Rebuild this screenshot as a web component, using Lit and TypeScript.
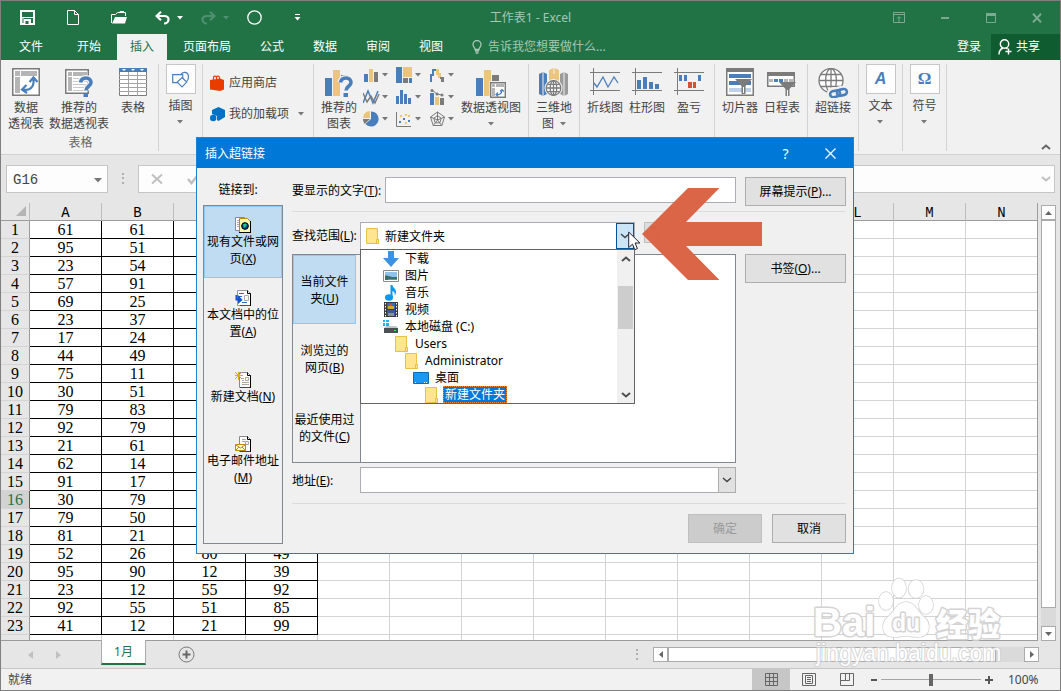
import { LitElement, html, svg, css, nothing } from "lit";
import { customElement, state } from "lit/decorators.js";
import { classMap } from "lit/directives/class-map.js";

const BLUE = "#4a7ebb";
const TAN = "#ecc57c";
const GRAY = "#7b7b7b";

const icon = (w: number, h: number, body: unknown, crisp = false) => html`
  <svg
    class="icon"
    width=${w}
    height=${h}
    viewBox="0 0 ${w} ${h}"
    fill="none"
    aria-hidden="true"
    shape-rendering=${crisp ? "crispEdges" : "auto"}
  >
    ${body}
  </svg>
`;

const baseStyles = css`
  * {
    box-sizing: border-box;
  }
  .icon {
    display: block;
    flex: none;
  }
  button {
    font: inherit;
    color: inherit;
    background: none;
    border: 0;
    margin: 0;
    padding: 0;
    cursor: default;
  }
  input,
  select {
    font: inherit;
    color: inherit;
    margin: 0;
    min-width: 0;
    outline: none;
    border-radius: 0;
  }
`;

/* ---------- glyphs: title bar ---------- */
const saveIcon = icon(15, 15, svg`<path d="M1 1h13v13H1z" stroke="#fff" stroke-width="2"/><path d="M3 2h9v5H3z" fill="#217346"/><path d="M2 7.500h11" stroke="#fff"/><path d="M4 9h7v5H4z" fill="#fff"/><path d="M5.500 11h3v3h-3z" fill="#217346"/><path d="M3 8v5" stroke="#fff"/>`);
const newIcon = icon(12, 15, svg`<path d="M.5.5h7l4 4v10H.5zM7.500.5v4h4" stroke="#fff"/>`);
const openIcon = icon(16, 13, svg`<path d="M.5 12V3.500h4l2-2h8V5" stroke="#fff"/><path d="M8 1.500 9 .5h4" stroke="#fff"/><path d="M1 12.500 4 6h12l-2 6.500z" fill="#fff"/>`);
const undoIcon = icon(15, 14, svg`<path d="M1.500 5H9c3 0 4.500 1.500 4.500 3.500S12 12.500 9 12.500M6 .8 1.600 5 6 9.200" stroke="currentColor" stroke-width="2.200"/>`);
const redoIcon = icon(15, 14, svg`<path d="M13.500 5H6C3 5 1.500 6.500 1.500 8.500S3 12.500 6 12.500M9 .8 13.400 5 9 9.200" stroke="currentColor" stroke-width="2.200"/>`);
const circleIcon = icon(15, 15, svg`<circle cx="7.500" cy="7.500" r="6.700" stroke="#fff" stroke-width="1.300"/>`);
const customizeIcon = icon(7, 7, svg`<path d="M1 .5h5" stroke="#fff"/><path d="M.5 3h6l-3 3.500z" fill="#fff"/>`);
const caret = icon(6, 4, svg`<path d="M0 0h6L3 3.500z" fill="currentColor"/>`);
const ribbonOptIcon = icon(12, 11, svg`<path d="M.5.5h11v10H.5zM0 2.500h12M6 10V5M4 6.500 6 4.500l2 2" stroke="currentColor"/>`);
const minIcon = icon(8, 2, svg`<path d="M0 0h8v2H0z" fill="currentColor"/>`);
const maxIcon = icon(10, 10, svg`<path d="M.5.5h9v9H.5z" stroke="currentColor"/><path d="M0 0h10v3H0z" fill="currentColor"/>`);
const closeIcon = icon(10, 10, svg`<path d="m1 .8 8 8.400M9 .8 1 9.200" stroke="currentColor" stroke-width="2"/>`);
const bulbIcon = icon(10, 14, svg`<path d="M3 9.500C3 7.500 1 7 1 4.500a4 4 0 0 1 8 0C9 7 7 7.500 7 9.500zM3 11h4M3.500 13h3" stroke="currentColor" stroke-width="1.300"/>`);
const shareIcon = icon(14, 16, svg`<circle cx="6.500" cy="5" r="4.200" stroke="#fff" stroke-width="1.400"/><path d="M1 15.500c0-3.500 1.500-5.500 4-6.500M8 9l1.500 1M10.500 9.500v6M7.500 12.500h6" stroke="#fff" stroke-width="1.400"/>`);

/* ---------- glyphs: ribbon ---------- */
const pivotBody = svg`<path d="M.75.75h26.500v26.500H.75z" fill="#fff" stroke="${GRAY}" stroke-width="1.500"/><path d="M3 3h5v5H3zM9 3h16v5H9zM3 9h5v16H3z" fill="#b5b5b5"/>`;
const pivotIcon = icon(28, 28, svg`${pivotBody}<path d="M11 21.500c6 1.500 11.500-2 10.500-10M17.500 14l4-4.500 4 4.500M14.500 17l-4.500 4.500 5 3.500" stroke="${BLUE}" stroke-width="2.200"/>`);
const question = svg`<path d="M15.500 14.500c.5-3 2.500-4.500 5.500-4.500 3 0 5 1.800 5 4.500 0 4-5 3.500-5 8" stroke="#f1f1f1" stroke-width="6"/><path d="M15.500 14.500c.5-3 2.500-4.500 5.500-4.500 3 0 5 1.800 5 4.500 0 4-5 3.500-5 8" stroke="${BLUE}" stroke-width="3.600"/><path d="M18.500 25h4.500v4h-4.500z" fill="${BLUE}"/>`;
const recPivotIcon = icon(28, 29, svg`<path d="M.75 1.750h22.500v23.500H.75z" fill="#fff" stroke="${GRAY}" stroke-width="1.500"/><path d="M3 4h4v4H3zM8 4h14v4H8zM3 9h4v14H3z" fill="#b5b5b5"/><path d="M8 10.500h14M8 13.500h14M8 16.500h14M8 19.500h14M8 22.500h12" stroke="#c8c8c8"/>${question}`);
const tableIcon = icon(28, 28, svg`<path d="M.5.5h27v27H.5z" fill="#fff" stroke="${GRAY}"/><path d="M0 0h28v4H0z" fill="${BLUE}"/><path d="M0 7.500h28M0 11.500h28M0 15.500h28M0 19.500h28M0 23.500h28M9.500 4v24M18.500 4v24" stroke="#a3a3a3"/><path d="M3 1h4L5 3zM12 1h4l-2 2zM21 1h4l-2 2z" fill="#fff"/>`);
const shapesIcon = icon(18, 17, svg`<path d="M9 3.500C10 .5 16.500 0 16.500 6c0 3-1 4-2.500 5" stroke="${BLUE}" stroke-width="1.200"/><path d="M.7 3.700h10v8H.7z" stroke="${BLUE}" stroke-width="1.200"/><path d="m10 6.500 4.700 4.600L10 15.800l-4.700-4.700z" fill="#fff" stroke="${BLUE}" stroke-width="1.200"/>`);
const storeIcon = icon(15, 16, svg`<path d="M0 5l10-1.500V16L0 14.500z" fill="#eb3c00"/><path d="M10 3.500 14 5v9.500L10 16z" fill="#eb3c00"/><path d="M3.500 5V2.500C3.500.8 6 .6 6.500 2.200V4M6.500 2C7 .5 9.500.8 9.500 2.500V4" stroke="#eb3c00" stroke-width="1.200"/>`);
const addinIcon = icon(15, 15, svg`<path d="m8.500 0 6.500 3v7l-6.500 4-1.500-1V9L2 7V3z" fill="#0072c6"/><circle cx="3.200" cy="11" r="3.200" fill="#0072c6"/>`);
const bars = svg`<path d="M0 10h7v18H0z" fill="${BLUE}"/><path d="M8 2h7v26H8z" fill="${TAN}"/><path d="M16 7h7v21h-7z" fill="${GRAY}"/>`;
const recChartIcon = icon(28, 30, svg`${bars}<path d="M16 12h7v16h-7z" fill="#f1f1f1"/>${question}`);
const pivotChartIcon = icon(30, 30, svg`${bars}<path d="M13.500 13h18v20h-18z" fill="#f1f1f1"/><path d="M14.700 14.700h14.600v14.600H14.700z" fill="#fff" stroke="${GRAY}" stroke-width="1.400"/><path d="M16 16h3v3h-3zM20 16h8v3h-8zM16 20h3v8h-3z" fill="#b5b5b5"/><path d="M20 26.500c3 .5 6-.5 6-4.500M24 23.500l2-2 2 2M22 24.500l-2 2 2 2" stroke="${BLUE}" stroke-width="1.200"/>`);
const chartMinis = [
  icon(16, 15, svg`<path d="M1 6h4v8H1z" fill="${BLUE}"/><path d="M6 1h4v13H6z" fill="${TAN}"/><path d="M11 4h4v10h-4z" fill="${GRAY}"/>`, true),
  icon(17, 16, svg`<path d="M0 0h6v16H0z" fill="${BLUE}"/><path d="M7 0h9v10H7z" fill="${TAN}"/><path d="M7 11h5v5H7z" fill="${GRAY}"/><path d="M13 11h3v5h-3z" fill="${BLUE}"/>`, true),
  icon(16, 15, svg`<path d="M1.500 14V6.500h2V1.500h4V6" stroke="${BLUE}" stroke-width="2"/><path d="M7 1h3v6H7z" fill="${TAN}"/><path d="M9 5h3v5H9z" fill="${TAN}"/><path d="M11 9h4v5h-3v-3h-1z" fill="${GRAY}"/>`, true),
  icon(17, 16, svg`<path d="m0 14 5-12 5 12 5-12" stroke="${BLUE}" stroke-width="1.500"/><path d="m0 4 4 9 4-6 4 7 4-9" stroke="${GRAY}" stroke-width="1.400"/>`),
  icon(16, 15, svg`<path d="M0 6h3v8H0zM4 0h3v14H4zM8 4h3v10H8zM12 8h3v6h-3z" fill="${BLUE}"/>`, true),
  icon(16, 16, svg`<path d="M1 4h4v12H1z" fill="${BLUE}"/><path d="M6 8h4v8H6z" fill="${TAN}"/><path d="M11 9h4v7h-4z" fill="${GRAY}"/><path d="m3 1 5 4 5 1" stroke="${GRAY}"/><circle cx="3" cy="1.500" r="1.500" fill="${GRAY}"/><circle cx="8" cy="5" r="1.500" fill="${GRAY}"/><circle cx="13" cy="6" r="1.500" fill="${GRAY}"/>`),
  icon(16, 16, svg`<path d="M8 8V.5A7.500 7.500 0 1 1 2.500 13z" fill="${BLUE}"/><path d="M7 7H0a7 7 0 0 1 7-7z" fill="${TAN}"/><path d="M7 8H0c0 2 .8 3.600 1.800 5z" fill="${GRAY}"/>`),
  icon(16, 16, svg`<path d="M.5 1v14.500H15" stroke="${GRAY}"/><path d="M3 10h2v2H3zM7 7h2v2H7zM12 9h2v2h-2z" fill="${BLUE}"/><path d="M4 4h2v2H4zM9 3h2v2H9zM12 4h2v2h-2zM9 11h2v2H9z" fill="${TAN}"/>`),
  icon(17, 16, svg`<path d="m8.500 1 7 5-2.700 8.500H4.200L1.500 6zM8.500 4.500l3.800 2.800-1.500 4.500H6.200L4.700 7.300zM8.500 1v8M15.500 6l-7 3M12.800 14.500 8.500 9M4.200 14.500 8.500 9M1.500 6l7 3" stroke="${GRAY}"/>`),
];
const globe = (x: number, y: number, r: number, bg: string) => svg`<g transform="translate(${x} ${y})" stroke="${GRAY}" stroke-width="1.300"><circle r="${r}" fill="${bg}"/><ellipse rx="${r * 0.45}" ry="${r}"/><path d="M${-r} 0H${r}M0 ${-r}V${r}M${-r * 0.85} ${-r * 0.5}H${r * 0.85}M${-r * 0.85} ${r * 0.5}H${r * 0.85}"/></g>`;
const mapIcon = icon(30, 28, svg`<path d="M0 6l4-2 4 2v20l-4 2-4-2z" fill="${BLUE}"/><path d="M10 2l5-2 5 2v24H10z" fill="${TAN}"/><path d="M21 6l4-2 4 2v20l-4 2-4-2z" fill="#9b9b9b"/><path d="M4 4v24M15 0v6M25 4v24" stroke="#f1f1f1"/><circle cx="14.500" cy="20" r="9" fill="#f1f1f1"/>${globe(14.5, 20, 7.3, "#fff")}`);
const axes = svg`<path d="M3.500 0v27M0 4.500h30M0 22.500h30" stroke="${GRAY}"/>`;
const sparkLineIcon = icon(30, 28, svg`${axes}<path d="m4 15 3 4 6-10 5 10 6-10 4 6" stroke="${BLUE}" stroke-width="1.300"/>`);
const sparkColIcon = icon(30, 28, svg`${axes}<path d="M5 12h4v9H5zM11 9h4v12h-4zM17 14h4v7h-4zM23 16h4v5h-4z" fill="${BLUE}"/>`, true);
const sparkWinIcon = icon(30, 28, svg`${axes}<path d="M5 7h3v6H5zM10 7h3v6h-3zM24 7h3v6h-3z" fill="${BLUE}"/><path d="M14 14h4v6h-4zM19 14h3v6h-3z" fill="#d35230"/>`, true);
const funnel = (x: number, y: number) => svg`<path transform="translate(${x} ${y})" d="M0 0h17l-6.500 7v8h-4V7z" fill="${GRAY}"/><path transform="translate(${x} ${y})" d="M8.500 8v6" stroke="#fff"/>`;
const slicerIcon = icon(28, 28, svg`<path d="M.75.75h26.500v26.500H.75z" fill="#fff" stroke="${GRAY}" stroke-width="1.500"/><path d="M0 0h28v4H0z" fill="${GRAY}"/><path d="M3 6h22v4H3zM3 13h22v4H3z" fill="${BLUE}"/><path d="M3 20h22v4H3z" fill="#c0d0e8"/>${funnel(9, 11)}`);
const timelineIcon = icon(30, 28, svg`<path d="M.75 4.750h26.500v13.500H.75z" fill="#fff" stroke="${GRAY}" stroke-width="1.500"/><path d="M0 4h28v4H0z" fill="${GRAY}"/><path d="M2 11h4v3H2zM17 11h4v3h-4zM22 11h4v3h-4z" fill="#b5b5b5"/><path d="M7 11h4v3H7zM12 11h4v3h-4z" fill="${BLUE}"/>${funnel(12, 14)}`);
const linkIcon = icon(32, 30, svg`${globe(14, 12.5, 12, "#fff")}<g stroke="#f1f1f1" stroke-width="6"><rect x="13" y="22" width="11" height="6.500" rx="3.200"/><rect x="20" y="21" width="11" height="6.500" rx="3.200"/></g><g stroke="${BLUE}" stroke-width="2.600" transform="rotate(-12 22 25)"><rect x="13" y="22" width="10" height="6" rx="3"/><rect x="20" y="22" width="10" height="6" rx="3"/></g>`);
const chevronUp = icon(10, 6, svg`<path d="m1 5 4-3.500L9 5" stroke="currentColor" stroke-width="2"/>`);
const chevronDown = icon(10, 6, svg`<path d="m1 1 4 3.500L9 1" stroke="currentColor" stroke-width="1.500"/>`);

/* ---------- glyphs: dialog ---------- */
const docBase = svg`<path d="M4.500.5h8l3 3v12h-11z" fill="#fff" stroke="#8a8a8a"/><path d="M15.500 3.500v12.500H5" stroke="#000"/><path d="M12.500.5v3h3" stroke="#000"/>`;
const fileWebIcon = icon(16, 16, svg`<path d="M.5.5h9v13h-9z" fill="#fff" stroke="#8a8a8a"/><path d="M2 3.500h5M2 5.500h5M2 7.500h5M2 9.500h5" stroke="#aaa"/><path d="M4.500 1.500h8l3 3v11h-11z" fill="#fff8b0" stroke="#b98b00"/><path d="M15.500 4v12M4 15.500h12" stroke="#000"/><circle cx="10" cy="9" r="3.500" fill="#0a4a9a"/><path d="M8 7.500 10.500 6 12 8l-3 3z" fill="#21c48b"/><circle cx="10" cy="9" r="3.300" stroke="#000"/>`);
const docPlaceIcon = icon(16, 16, svg`<path d="M2.500.5h10l3 3v12h-13z" fill="#fff" stroke="#9a9a9a"/><path d="M15.500 3.500v12.500H5M12.500.5v3h3" stroke="#000"/><path d="M4 3.500h5M4 6.500h3M7 12.500h5" stroke="#2a62d8"/><path d="M9.500 5.500h4v5h-4z" stroke="#aaa"/><path d="M1.500 5v4.500H4" stroke="#1450c8" stroke-width="2"/><path d="m3 5 4.500 5L3 14z" fill="#1450c8"/>`);
const newDocIcon = icon(16, 16, svg`${docBase}<path d="M7 6.500h2M7 8.500h2M7 10.500h7M7 12.500h7M10.500 5.500h3v3h-3z" stroke="#aaa"/><path d="m0 0 7 7M7 0 0 7M3.500 0v8M0 3.500h8" stroke="#e0b000"/>`);
const mailIcon = icon(16, 16, svg`${docBase}<path d="M7 3.500h4M7 5.500h4M10.500 5.500h3v3h-3z" stroke="#aaa"/><path d="M.5 8.500h10v6H.5z" fill="#ffffd8" stroke="#b98b00"/><path d="m1 9 4.500 3L10 9M1 14l3-3M10 14l-3-3" stroke="#b98b00"/>`);
const folderIcon = icon(16, 16, svg`<path d="M2.500.5h11v11h1v4h-12z" fill="#ffe58f" stroke="#e9bf46"/><path d="M12.500 11.500h2v4h-2z" fill="#ffe58f" stroke="#e9bf46"/>`);
const downloadIcon = icon(16, 16, svg`<path d="M5 0h6v7h5l-8 9-8-9h5z" fill="#3a92e5"/>`);
const pictureIcon = icon(16, 12, svg`<path d="M.5.5h15v11H.5z" fill="#fff" stroke="#8b8b8b"/><path d="M2 2h12v5H2z" fill="#8fc3ee"/><path d="M2 5.500c3-.5 5 2 12 1.500v3H2z" fill="#3b6f67"/><path d="M5 9h9v1H5z" fill="#5b93c7"/>`);
const musicIcon = icon(16, 16, svg`<ellipse cx="6" cy="12.500" rx="4" ry="3.200" fill="#0c98f0"/><path d="M7.500 12V0h2c0 3 3.500 3.500 3.500 7 0 1.500-.6 2.700-1.300 3.500.5-3-1-4-2.200-4.500V13z" fill="#0c98f0"/>`);
const videoIcon = icon(16, 16, svg`<path d="M1 0h14v15H1z" fill="#3b3b3b"/><path d="M4 1h8v6H4z" fill="#3e63c9"/><path d="M4 8h8v6H4z" fill="#3c55a5"/><path d="M5 4h6v3H5z" fill="#d5a526"/><path d="M6 2h3v2H6z" fill="#d14c3a"/><path d="M5 11h6v3H5z" fill="#8793a3"/><path d="M2.500 1v14M13.500 1v14" stroke="#fff" stroke-dasharray="1.500 1.500"/>`);
const driveIcon = icon(16, 14, svg`<path d="M0 0h2v2H0zM3 0h3v2H3zM0 3h2v3H0zM3 3h3v3H3z" fill="#1cb4ee"/><path d="m1 8 2-2h10l2 2z" fill="#c0c6cc"/><path d="M1 8h14v5H1z" fill="#4b5054"/><path d="M11 10h2v1h-2z" fill="#3df04a"/>`);
const desktopIcon = icon(16, 12, svg`<path d="M.5.5h15v11H.5z" fill="#1c98f3" stroke="#0b6db8"/><path d="M2 10.500h1M11 10.500h1M13 10.500h1" stroke="#fff"/>`);

@customElement("hyperlink-dialog")
class HyperlinkDialog extends LitElement {
  static styles = [
    baseStyles,
    css`
      :host {
        display: block;
        background: #f0f0f0;
        border: 1px solid #1883d7;
        color: #000;
        font-size: 12px;
        line-height: 17px;
      }
      .title {
        display: flex;
        height: 30px;
        align-items: center;
        background: #0078d7;
        color: #fff;
        padding-left: 8px;
      }
      .title h2 {
        flex: 1;
        margin: 0;
        font-size: 12px;
        font-weight: 400;
      }
      .title button {
        width: 45px;
        height: 30px;
        display: grid;
        place-items: center;
        font-size: 14px;
      }
      .body {
        display: flex;
        gap: 9px;
        padding: 9px 7px 9px 6px;
      }
      .side {
        width: 80px;
        display: flex;
        flex-direction: column;
      }
      .side h3 {
        margin: 4px 0 7px;
        padding-right: 10px;
        font-size: 12px;
        font-weight: 400;
        text-align: center;
      }
      .places {
        flex: 1;
        border: 1px solid #828790;
        display: flex;
        flex-direction: column;
        gap: 1px;
      }
      .place {
        height: 72px;
        border: 1px solid transparent;
        display: flex;
        flex-direction: column;
        align-items: center;
        justify-content: center;
        white-space: nowrap;
      }
      .chosen {
        background: #c0dcf3;
        border-color: #90c8f6;
      }
      .main {
        flex: 1;
        min-width: 0;
      }
      .row {
        display: flex;
        align-items: flex-start;
      }
      .row label {
        flex: none;
        padding-top: 1px;
        line-height: 26px;
        width: 68px;
        white-space: nowrap;
      }
      .row label.wide {
        width: 93px;
      }
      .field {
        flex: 1;
        height: 26px;
        background: #fff;
        border: 1px solid #abadb3;
        padding: 0 4px;
      }
      .btn {
        height: 29px;
        width: 101px;
        margin-left: 9px;
        flex: none;
        background: #e1e1e1;
        border: 1px solid #adadad;
      }
      .btn.small {
        width: 74px;
        margin-left: 10px;
      }
      .btn:disabled {
        background: #ccc;
        border-color: #bfbfbf;
        color: #9a9a9a;
      }
      .rule {
        border: 0;
        border-top: 1px solid #dcdcdc;
        margin: 5px 0 10px;
      }
      .rule.low {
        margin: 9px 0 10px;
      }
      .combo {
        position: relative;
        width: 275px;
        height: 27px;
        display: flex;
        align-items: center;
        background: #fff;
        border: 1px solid #abadb3;
        border-bottom: 0;
        padding-left: 3px;
      }
      .combo select {
        appearance: none;
        flex: 1;
        border: 0;
        background: none;
        padding: 0 0 0 5px;
        height: 24px;
      }
      .drop {
        width: 18px;
        align-self: stretch;
        display: grid;
        place-items: center;
        border: 1px solid #005499;
        background: #cce4f7;
        color: #444;
      }
      .nav {
        width: 21px;
        height: 21px;
        margin-left: 9px;
        border: 1px solid #bfbfbf;
        background: #ddd;
        display: grid;
        place-items: center;
      }
      .list {
        position: absolute;
        top: 26px;
        left: -1px;
        right: -1px;
        display: flex;
        background: #fff;
        border: 1px solid #646464;
        z-index: 2;
      }
      .list ul {
        flex: 1;
        margin: 0;
        padding: 0;
        list-style: none;
      }
      .list li {
        height: 17px;
        display: flex;
        align-items: center;
        gap: 4px;
        padding-left: 22px;
        white-space: nowrap;
      }
      .list .lv1 {
        padding-left: 32px;
      }
      .list .lv2 {
        padding-left: 42px;
      }
      .list .lv3 {
        padding-left: 52px;
      }
      .list .lv4 {
        padding-left: 62px;
      }
      .list li span {
        padding: 0 2px;
      }
      .list .current span {
        background: #0078d7;
        color: #fff;
        outline: 1px dotted #ff8728;
        outline-offset: -1px;
      }
      .bar {
        width: 17px;
        background: #f0f0f0;
        display: flex;
        flex-direction: column;
        align-items: center;
        color: #505050;
      }
      .bar i {
        height: 17px;
        display: grid;
        place-items: center;
      }
      .thumb {
        width: 15px;
        height: 43px;
        margin: 19px 0 auto;
        background: #cdcdcd;
      }
      .browse {
        margin-top: 5px;
      }
      .scopes {
        width: 68px;
        height: 209px;
        border: 1px solid #828790;
        border-right: 0;
        display: flex;
        flex-direction: column;
      }
      .scope {
        flex: 1;
        width: 63px;
        border: 1px solid transparent;
        white-space: nowrap;
        text-align: center;
      }
      .scope.chosen {
        background: #c0dcf3;
        border-color: #90c8f6;
      }
      .files {
        flex: 1;
        height: 209px;
        background: #fff;
        border: 1px solid #828790;
      }
      .address {
        margin-top: 4px;
        padding-right: 110px;
      }
      .address .field {
        border-right: 0;
      }
      .address button {
        width: 18px;
        height: 26px;
        display: grid;
        place-items: center;
        border: 1px solid #adadad;
        background: #e1e1e1;
        color: #444;
      }
      .actions {
        justify-content: flex-end;
        padding-bottom: 1px;
      }
    `,
  ];

  @state() private scope = 0;
  @state() private place = 0;

  private places = [
    { icon: fileWebIcon, text: html`现有文件或网<br />页(<u>X</u>)` },
    { icon: docPlaceIcon, text: html`本文档中的位<br />置(<u>A</u>)` },
    { icon: newDocIcon, text: html`新建文档(<u>N</u>)` },
    { icon: mailIcon, text: html`电子邮件地址<br />(<u>M</u>)` },
  ];
  private scopes = [
    html`当前文件<br />夹(<u>U</u>)`,
    html`浏览过的<br />网页(<u>B</u>)`,
    html`最近使用过<br />的文件(<u>C</u>)`,
  ];
  private folders = [
    { icon: downloadIcon, name: "下载", level: 0 },
    { icon: pictureIcon, name: "图片", level: 0 },
    { icon: musicIcon, name: "音乐", level: 0 },
    { icon: videoIcon, name: "视频", level: 0 },
    { icon: driveIcon, name: "本地磁盘 (C:)", level: 0 },
    { icon: folderIcon, name: "Users", level: 1 },
    { icon: folderIcon, name: "Administrator", level: 2 },
    { icon: desktopIcon, name: "桌面", level: 3 },
    { icon: folderIcon, name: "新建文件夹", level: 4 },
  ];

  render() {
    return html`
      <header class="title">
        <h2>插入超链接</h2>
        <button aria-label="帮助">?</button>
        <button aria-label="关闭">
          ${icon(11, 11, svg`<path d="m.5.5 10 10M10.500.5l-10 10" stroke="#fff" stroke-width="1.200"/>`)}
        </button>
      </header>
      <div class="body">
        <div class="side">
          <h3>链接到:</h3>
          <div class="places">
            ${this.places.map(
              (p, i) => html`<button
                class=${classMap({ place: true, chosen: i === this.place })}
                @click=${() => (this.place = i)}
              >
                ${p.icon}<span>${p.text}</span>
              </button>`
            )}
          </div>
        </div>
        <div class="main">
          <div class="row">
            <label class="wide" for="caption">要显示的文字(<u>T</u>):</label>
            <input class="field" id="caption" />
            <button class="btn">屏幕提示(<u>P</u>)...</button>
          </div>
          <hr class="rule" />
          <div class="row">
            <label for="lookin">查找范围(<u>L</u>):</label>
            <div class="combo">
              ${folderIcon}
              <select id="lookin">
                <option>新建文件夹</option>
              </select>
              <span class="drop">${chevronDown}</span>
              <div class="list">
                <ul>
                  ${this.folders.map(
                    (f) => html`<li class=${classMap({ ["lv" + f.level]: true, current: f.level === 4 })}>
                      ${f.icon}<span>${f.name}</span>
                    </li>`
                  )}
                </ul>
                <div class="bar">
                  <i>${chevronUp}</i>
                  <div class="thumb"></div>
                  <i>${icon(10, 6, svg`<path d="m1 1 4 3.500L9 1" stroke="currentColor" stroke-width="2"/>`)}</i>
                </div>
              </div>
            </div>
            <button class="nav" disabled aria-label="上一级文件夹">
              ${icon(13, 13, svg`<path d="M1 4h4l1 2h6v6H1z" fill="#c9c9c9"/><path d="M3 0h6v3H3z" fill="#7fa894"/>`)}
            </button>
          </div>
          <div class="row browse">
            <div class="scopes">
              ${this.scopes.map(
                (s, i) => html`<button
                  class=${classMap({ scope: true, chosen: i === this.scope })}
                  @click=${() => (this.scope = i)}
                >
                  ${s}
                </button>`
              )}
            </div>
            <div class="files"></div>
            <button class="btn">书签(<u>O</u>)...</button>
          </div>
          <div class="row address">
            <label for="address">地址(<u>E</u>):</label>
            <input class="field" id="address" />
            <button aria-label="地址列表">${chevronDown}</button>
          </div>
          <hr class="rule low" />
          <div class="row actions">
            <button class="btn small" disabled>确定</button>
            <button class="btn small">取消</button>
          </div>
        </div>
      </div>
    `;
  }
}

const COLUMNS = "ABCDEFGHIJKLMN".split("");
const SHEET: Array<Array<number | null>> = [
  [61, 61], [95, 51], [23, 54], [57, 91], [69, 25], [23, 37], [17, 24], [44, 49],
  [75, 11], [30, 51], [79, 83], [92, 79], [21, 61], [62, 14], [91, 17], [30, 79],
  [79, 50], [81, 21], [52, 26, 80, 49], [95, 90, 12, 39], [23, 12, 55, 92],
  [92, 55, 51, 85], [41, 12, 21, 99],
];

@customElement("app-root")
class AppRoot extends LitElement {
  static styles = [
    baseStyles,
    css`
      :host {
        display: flex;
        flex-direction: column;
        position: relative;
        height: 100vh;
        overflow: hidden;
        box-sizing: border-box;
        border: 1px solid #7f7f7f;
        background: #e6e6e6;
        color: #444;
        font: 12px/16px "Noto Sans", "Noto Sans CJK SC", sans-serif;
      }
      .titlebar {
        flex: none;
        height: 33px;
        display: grid;
        grid-template-columns: 1fr auto 1fr;
        align-items: center;
        background: #217346;
        color: #a6c7b5;
      }
      .titlebar h1 {
        margin: 0;
        font-size: 12px;
        font-weight: 400;
      }
      .quick {
        display: flex;
        padding-left: 3px;
        color: #fff;
      }
      .quick button,
      .window button {
        width: 46px;
        height: 30px;
        display: flex;
        align-items: center;
        justify-content: center;
      }
      .quick .split {
        justify-content: flex-end;
        gap: 7px;
        padding-right: 5px;
      }
      .quick .split:disabled {
        color: #4f9070;
      }
      .quick .pen {
        width: 40px;
      }
      .window {
        display: flex;
        justify-content: flex-end;
        color: #7aab90;
      }
      .tabs {
        flex: none;
        height: 26px;
        display: flex;
        gap: 3px;
        background: #217346;
        color: #fff;
      }
      .tab {
        padding: 0 13px;
      }
      .tab.file {
        width: 60px;
      }
      .tab.active {
        background: #f1f1f1;
        color: #217346;
      }
      .tell {
        display: flex;
        align-items: center;
        gap: 6px;
        padding-left: 13px;
        color: #a6c7b5;
      }
      .signin {
        margin-left: auto;
        padding: 0 7px;
      }
      .share {
        display: flex;
        align-items: center;
        gap: 4px;
        width: 69px;
        padding-left: 7px;
        background: #0e5c2f;
      }
      .ribbon {
        flex: none;
        height: 95px;
        display: flex;
        background: #f1f1f1;
        border-bottom: 1px solid #d2d2d2;
      }
      .group {
        height: 87px;
        margin-top: 4px;
        display: flex;
        align-items: flex-start;
        flex-wrap: wrap;
        border-right: 1px solid #d2d2d2;
      }
      .group.tables {
        width: 158px;
        padding-left: 2px;
      }
      .caption {
        width: 100%;
        text-align: center;
        color: #666;
      }
      .big {
        display: flex;
        flex-direction: column;
        align-items: center;
        gap: 4px;
        padding-top: 4px;
        height: 71px;
        white-space: nowrap;
      }
      .big .pic {
        height: 28px;
      }
      .w42 {
        width: 42px;
      }
      .w46 {
        width: 46px;
      }
      .w48 {
        width: 48px;
      }
      .w50 {
        width: 50px;
      }
      .w60 {
        width: 60px;
      }
      .inset {
        padding: 0 4px;
      }
      .more {
        display: grid;
        place-items: center;
        height: 16px;
        color: #777;
      }
      .with-more {
        display: inline-flex;
        align-items: center;
        gap: 6px;
      }
      .gallery {
        width: 43px;
        display: flex;
        flex-direction: column;
        align-items: center;
        gap: 4px;
      }
      .gallery .pic {
        width: 30px;
        height: 30px;
        display: grid;
        place-items: center;
        border: 1px solid #c6c6c6;
        background: #fdfdfd;
        color: #4a7ebb;
        font: bold 17px/20px "Liberation Serif", serif;
      }
      .gallery .pic.slant {
        font: italic bold 16px/20px "Liberation Sans", sans-serif;
      }
      .apps {
        width: 111px;
        padding: 9px 0 0 7px;
        flex-direction: column;
        gap: 11px;
        flex-wrap: nowrap;
      }
      .apps button {
        display: flex;
        align-items: center;
        gap: 4px;
        height: 20px;
      }
      .apps .icon + span + .icon {
        margin-left: 5px;
        color: #777;
      }
      .charts {
        width: 215px;
        flex-wrap: nowrap;
        padding-left: 1px;
      }
      .minis {
        display: grid;
        grid-template-columns: repeat(3, 33px);
        grid-auto-rows: 22px;
        width: 98px;
      }
      .minis button {
        display: flex;
        align-items: center;
        justify-content: space-between;
        padding-right: 8px;
        color: #777;
      }
      .fold {
        margin: auto 9px 4px auto;
        color: #666;
      }
      .formula {
        flex: none;
        display: flex;
        align-items: center;
        padding: 10px 5px;
        height: 48px;
      }
      .box {
        display: flex;
        align-items: center;
        height: 28px;
        border: 1px solid #c6c6c6;
        background: #fdfdfd;
      }
      .box input {
        border: 0;
        background: none;
        flex: 1;
      }
      .name {
        width: 102px;
        padding: 2px 5px 0 4px;
        font: 14px/20px "Liberation Mono", monospace;
      }
      .dots {
        width: 30px;
        display: grid;
        place-items: center;
      }
      .fx {
        flex: 1;
        gap: 24px;
        padding: 0 3px 0 12px;
        color: #c0c0c0;
      }
      .grid-area {
        flex: 1;
        min-height: 0;
        display: flex;
      }
      .viewport {
        flex: 1;
        overflow: hidden;
        border-right: 1px solid #9b9b9b;
        border-bottom: 1px solid #9b9b9b;
      }
      table {
        table-layout: fixed;
        width: 1037px;
        border-collapse: separate;
        border-spacing: 0;
        background: #fff;
        color: #000;
        font: 16px/16px "Liberation Serif", serif;
      }
      .rownum {
        width: 29px;
      }
      th,
      td {
        height: 18px;
        padding: 1px 0 0;
        font-weight: 400;
        text-align: center;
        border-right: 1px solid #d4d4d4;
        border-bottom: 1px solid #d4d4d4;
      }
      th {
        background: #e6e6e6;
        border-right-color: #9b9b9b;
      }
      thead th {
        padding-top: 3px;
        font: 14px/14px "Liberation Mono", monospace;
        border-color: #bdbdbd;
        border-bottom-color: #9b9b9b;
      }
      .corner {
        padding: 0 3px 2px 0;
      }
      .corner .icon {
        margin-left: auto;
      }
      td.used {
        border-color: #000;
      }
      th.here {
        background: #d2d2d2;
        color: #217346;
        border-right-color: #217346;
      }
      .vbar {
        width: 22px;
        padding: 2px 4px 0 3px;
        display: flex;
        flex-direction: column;
      }
      .step {
        width: 15px;
        height: 15px;
        flex: none;
        display: grid;
        place-items: center;
        border: 1px solid #ababab;
        background: #fff;
        color: #666;
      }
      .track {
        flex: 1;
        background: #dadada;
        display: flex;
      }
      .track div {
        border: 1px solid #ababab;
        background: #fff;
      }
      .vbar .track div {
        width: 100%;
        height: 95.5%;
      }
      .sheets {
        flex: none;
        height: 27px;
        display: flex;
        align-items: center;
        color: #c0c0c0;
      }
      .steps {
        width: 100px;
        display: flex;
        gap: 23px;
        padding-left: 27px;
      }
      .sheet {
        align-self: flex-start;
        height: 25px;
        margin-top: -1px;
        width: 45px;
        background: #fff;
        border: 1px solid #ababab;
        border-top: 0;
        border-bottom: 2px solid #217346;
        color: #217346;
      }
      .add {
        margin-left: 32px;
      }
      .split-grip {
        margin-left: auto;
        margin-right: 15px;
      }
      .hbar {
        width: 386px;
        height: 15px;
        margin-right: 21px;
        display: flex;
      }
      .hbar .track div {
        width: 92%;
      }
      .status {
        flex: none;
        height: 22px;
        display: flex;
        align-items: center;
        border-top: 1px solid #c6c6c6;
        background: #f1f1f1;
        padding-left: 7px;
      }
      .view {
        width: 38px;
        height: 21px;
        display: grid;
        place-items: center;
      }
      .view.on {
        background: #c6c6c6;
        margin-left: auto;
      }
      .zoom {
        display: flex;
        align-items: center;
        gap: 4px;
        padding-left: 5px;
      }
      .zoom input {
        appearance: none;
        width: 100px;
        height: 12px;
        background: linear-gradient(#a6a6a6, #a6a6a6) center / 100% 1px no-repeat;
      }
      .zoom input::-webkit-slider-thumb {
        appearance: none;
        width: 4px;
        height: 12px;
        background: #666;
      }
      .percent {
        width: 67px;
        padding-left: 15px;
        text-align: left;
      }
      .dialog {
        position: absolute;
        left: 195px;
        top: 136px;
        width: 658px;
      }
      .arrow {
        position: absolute;
        left: 641px;
        top: 187px;
      }
      .cursor {
        position: absolute;
        left: 627px;
        top: 230px;
      }
      .mark {
        position: absolute;
        right: 48px;
        bottom: 18px;
        pointer-events: none;
      }
    `,
  ];

  @state() private tab = "插入";

  private big(pic: unknown, label: unknown, width: string) {
    return html`<button class="big ${width}"><span class="pic">${pic}</span><span>${label}</span></button>`;
  }

  private gallery(pic: unknown, label: string, slant = false) {
    return html`<div class="group">
      <button class="gallery">
        <span class=${classMap({ pic: true, slant })}>${pic}</span>
        <span>${label}<span class="more">${caret}</span></span>
      </button>
    </div>`;
  }

  private renderRibbon() {
    return html`<div class="ribbon">
      <div class="group tables">
        ${this.big(pivotIcon, html`数据<br />透视表`, "w46")}
        ${this.big(recPivotIcon, html`推荐的<br />数据透视表`, "w60")}
        ${this.big(tableIcon, "表格", "w48")}
        <span class="caption">表格</span>
      </div>
      ${this.gallery(shapesIcon, "插图")}
      <div class="group apps">
        <button>${storeIcon}<span>应用商店</span></button>
        <button>${addinIcon}<span>我的加载项</span>${caret}</button>
      </div>
      <div class="group charts">
        ${this.big(recChartIcon, html`推荐的<br />图表`, "w48")}
        <div class="minis">${chartMinis.map((m) => html`<button>${m}${caret}</button>`)}</div>
        ${this.big(pivotChartIcon, html`数据透视图<span class="more">${caret}</span>`, "w60")}
      </div>
      <div class="group">
        ${this.big(mapIcon, html`三维地<br /><span class="with-more">图<span class="more">${caret}</span></span>`, "w50")}
      </div>
      <div class="group inset">
        ${this.big(sparkLineIcon, "折线图", "w42")} ${this.big(sparkColIcon, "柱形图", "w42")}
        ${this.big(sparkWinIcon, "盈亏", "w42")}
      </div>
      <div class="group inset">
        ${this.big(slicerIcon, "切片器", "w42")} ${this.big(timelineIcon, "日程表", "w42")}
      </div>
      <div class="group">${this.big(linkIcon, "超链接", "w50")}</div>
      ${this.gallery("A", "文本", true)} ${this.gallery("Ω", "符号")}
      <button class="fold" aria-label="折叠功能区">${chevronUp}</button>
    </div>`;
  }

  private renderGrid() {
    const rows = [...SHEET, []];
    return html`<div class="grid-area">
      <div class="viewport">
        <table>
          <colgroup>
            <col class="rownum" />
            ${COLUMNS.map(() => html`<col />`)}
          </colgroup>
          <thead>
            <tr>
              <th class="corner">${icon(10, 10, svg`<path d="M10 0v10H0z" fill="#b4b4b4"/>`)}</th>
              ${COLUMNS.map((c) => html`<th>${c}</th>`)}
            </tr>
          </thead>
          <tbody>
            ${rows.map(
              (cells, r) => html`<tr>
                <th class=${classMap({ here: r === 15 })}>${r < 23 ? r + 1 : nothing}</th>
                ${COLUMNS.map((_, c) => html`<td class=${classMap({ used: r < 23 && c < 4 })}>${cells[c] ?? nothing}</td>`)}
              </tr>`
            )}
          </tbody>
        </table>
      </div>
      <div class="vbar">
        <button class="step" aria-label="向上">${icon(7, 4, svg`<path d="M0 4h7L3.500 0z" fill="currentColor"/>`)}</button>
        <div class="track"><div></div></div>
        <button class="step" aria-label="向下">${icon(7, 4, svg`<path d="M0 0h7L3.500 4z" fill="currentColor"/>`)}</button>
      </div>
    </div>`;
  }

  private renderMark() {
    return html`<svg class="mark" width="200" height="96" viewBox="0 0 200 96" aria-hidden="true">
      <g fill="#fff" stroke="#cfcfcf" stroke-width="1.500" paint-order="stroke" stroke-linejoin="round" opacity=".9">
        <ellipse cx="74" cy="25" rx="7" ry="9" />
        <ellipse cx="87" cy="12" rx="7" ry="9.500" />
        <ellipse cx="104" cy="13" rx="7.500" ry="9" />
        <ellipse cx="114" cy="29" rx="7" ry="9" />
        <path d="M94 26c9 0 11 9 17 14 9 7 8 21-5 21-5 0-8-1-12-1s-7 1-12 1c-13 0-14-14-5-21 6-5 8-14 17-14z" />
        <g stroke-width="3" font-family="'Liberation Sans', sans-serif" font-weight="700">
          <text x="1" y="60" font-size="40">Bai</text>
          <text x="80" y="55" font-size="23">du</text>
        </g>
        <text x="124" y="60" font-size="32" font-weight="900" stroke-width="3" font-family="'Noto Sans CJK SC', sans-serif">经验</text>
        <text x="4" y="85" font-size="23" stroke-width="2" font-family="'Liberation Sans', sans-serif">jingyan.baidu.com</text>
      </g>
    </svg>`;
  }

  render() {
    const tabs = ["开始", "插入", "页面布局", "公式", "数据", "审阅", "视图"];
    return html`
      <header class="titlebar">
        <div class="quick">
          <button aria-label="保存">${saveIcon}</button>
          <button aria-label="新建">${newIcon}</button>
          <button aria-label="打开">${openIcon}</button>
          <button class="split" aria-label="撤消">${undoIcon}${caret}</button>
          <button class="split" disabled aria-label="恢复">${redoIcon}${caret}</button>
          <button class="pen" aria-label="椭圆">${circleIcon}</button>
          <button aria-label="自定义快速访问工具栏">${customizeIcon}</button>
        </div>
        <h1>工作表1 - Excel</h1>
        <div class="window">
          <button aria-label="功能区显示选项">${ribbonOptIcon}</button>
          <button aria-label="最小化">${minIcon}</button>
          <button aria-label="最大化">${maxIcon}</button>
          <button aria-label="关闭">${closeIcon}</button>
        </div>
      </header>
      <nav class="tabs">
        <button class="tab file">文件</button>
        ${tabs.map(
          (t) => html`<button class=${classMap({ tab: true, active: t === this.tab })} @click=${() => (this.tab = t)}>
            ${t}
          </button>`
        )}
        <button class="tell">${bulbIcon}<span>告诉我您想要做什么...</span></button>
        <button class="signin">登录</button>
        <button class="share">${shareIcon}<span>共享</span></button>
      </nav>
      ${this.renderRibbon()}
      <div class="formula">
        <div class="box name">
          <input aria-label="名称框" value="G16" />
          ${icon(8, 5, svg`<path d="M0 0h8L4 4.500z" fill="#777"/>`)}
        </div>
        <span class="dots">${icon(2, 12, svg`<path d="M0 0h2v2H0zM0 4h2v2H0zM0 9h2v2H0z" fill="#b0b0b0"/>`)}</span>
        <div class="box fx">
          ${icon(12, 12, svg`<path d="m1 1.500 10 9M11 1.500l-10 9" stroke="currentColor" stroke-width="2"/>`)}
          ${icon(12, 12, svg`<path d="m1 6 3.500 4L11 2" stroke="currentColor" stroke-width="2.500"/>`)}
          <input aria-label="编辑栏" />
          ${icon(10, 6, svg`<path d="m1 1 4 3.500L9 1" stroke="currentColor" stroke-width="2"/>`)}
        </div>
      </div>
      ${this.renderGrid()}
      <div class="sheets">
        <div class="steps">
          ${icon(5, 8, svg`<path d="M5 0v8L0 4z" fill="currentColor"/>`)}
          ${icon(5, 8, svg`<path d="M0 0v8l5-4z" fill="currentColor"/>`)}
        </div>
        <button class="sheet">1月</button>
        <button class="add" aria-label="新工作表">
          ${icon(17, 17, svg`<circle cx="8.500" cy="8.500" r="7.500" stroke="#777"/><path d="M8.500 4.500v8M4.500 8.500h8" stroke="#666" stroke-width="2"/>`)}
        </button>
        <span class="split-grip">${icon(2, 11, svg`<path d="M0 0h2v2H0zM0 4h2v2H0zM0 9h2v2H0z" fill="#b0b0b0"/>`)}</span>
        <div class="hbar">
          <button class="step" aria-label="向左">${icon(4, 7, svg`<path d="M4 0v7L0 3.500z" fill="currentColor"/>`)}</button>
          <div class="track"><div></div></div>
          <button class="step" aria-label="向右">${icon(4, 7, svg`<path d="M0 0v7l4-3.500z" fill="currentColor"/>`)}</button>
        </div>
      </div>
      <footer class="status">
        <span>就绪</span>
        <button class="view on" aria-label="普通">
          ${icon(13, 13, svg`<path d="M.5.5h12v12H.5zM4.500 0v13M8.500 0v13M0 4.500h13M0 8.500h13" stroke="#666"/>`)}
        </button>
        <button class="view" aria-label="页面布局">
          ${icon(14, 13, svg`<path d="M.5.5h13v12H.5zM3.500 2.500h7v8h-7zM5 4.500h4M5 6.500h4M5 8.500h4" stroke="#666"/>`)}
        </button>
        <button class="view" aria-label="分页预览">
          ${icon(14, 13, svg`<path d="M.5.5h13v12H.5zM5.500 0v7.500M0 7.500h9.500M9.500 0v7.500" stroke="#666"/>`)}
        </button>
        <div class="zoom">
          ${icon(6, 2, svg`<path d="M0 0h6v2H0z" fill="#555"/>`)}
          <input type="range" aria-label="缩放" min="0" max="100" value="50" />
          ${icon(8, 8, svg`<path d="M4 0v8M0 4h8" stroke="#555" stroke-width="2"/>`)}
        </div>
        <button class="percent">100%</button>
      </footer>

      <hyperlink-dialog class="dialog" role="dialog"></hyperlink-dialog>
      <svg class="arrow" width="120" height="92" aria-hidden="true">
        <path d="M0 46 46 0h31.500L44 34h76v24H44l33.500 34H46z" fill="#d96243" fill-opacity=".98" />
      </svg>
      <svg class="cursor" width="13" height="20" aria-hidden="true">
        <path d="M.7 1v15.500l3.800-3.300 2.300 5.500 2.600-1.100L7.100 12h4.800z" fill="#fff" stroke="#223" />
      </svg>
      ${this.renderMark()}
    `;
  }
}
